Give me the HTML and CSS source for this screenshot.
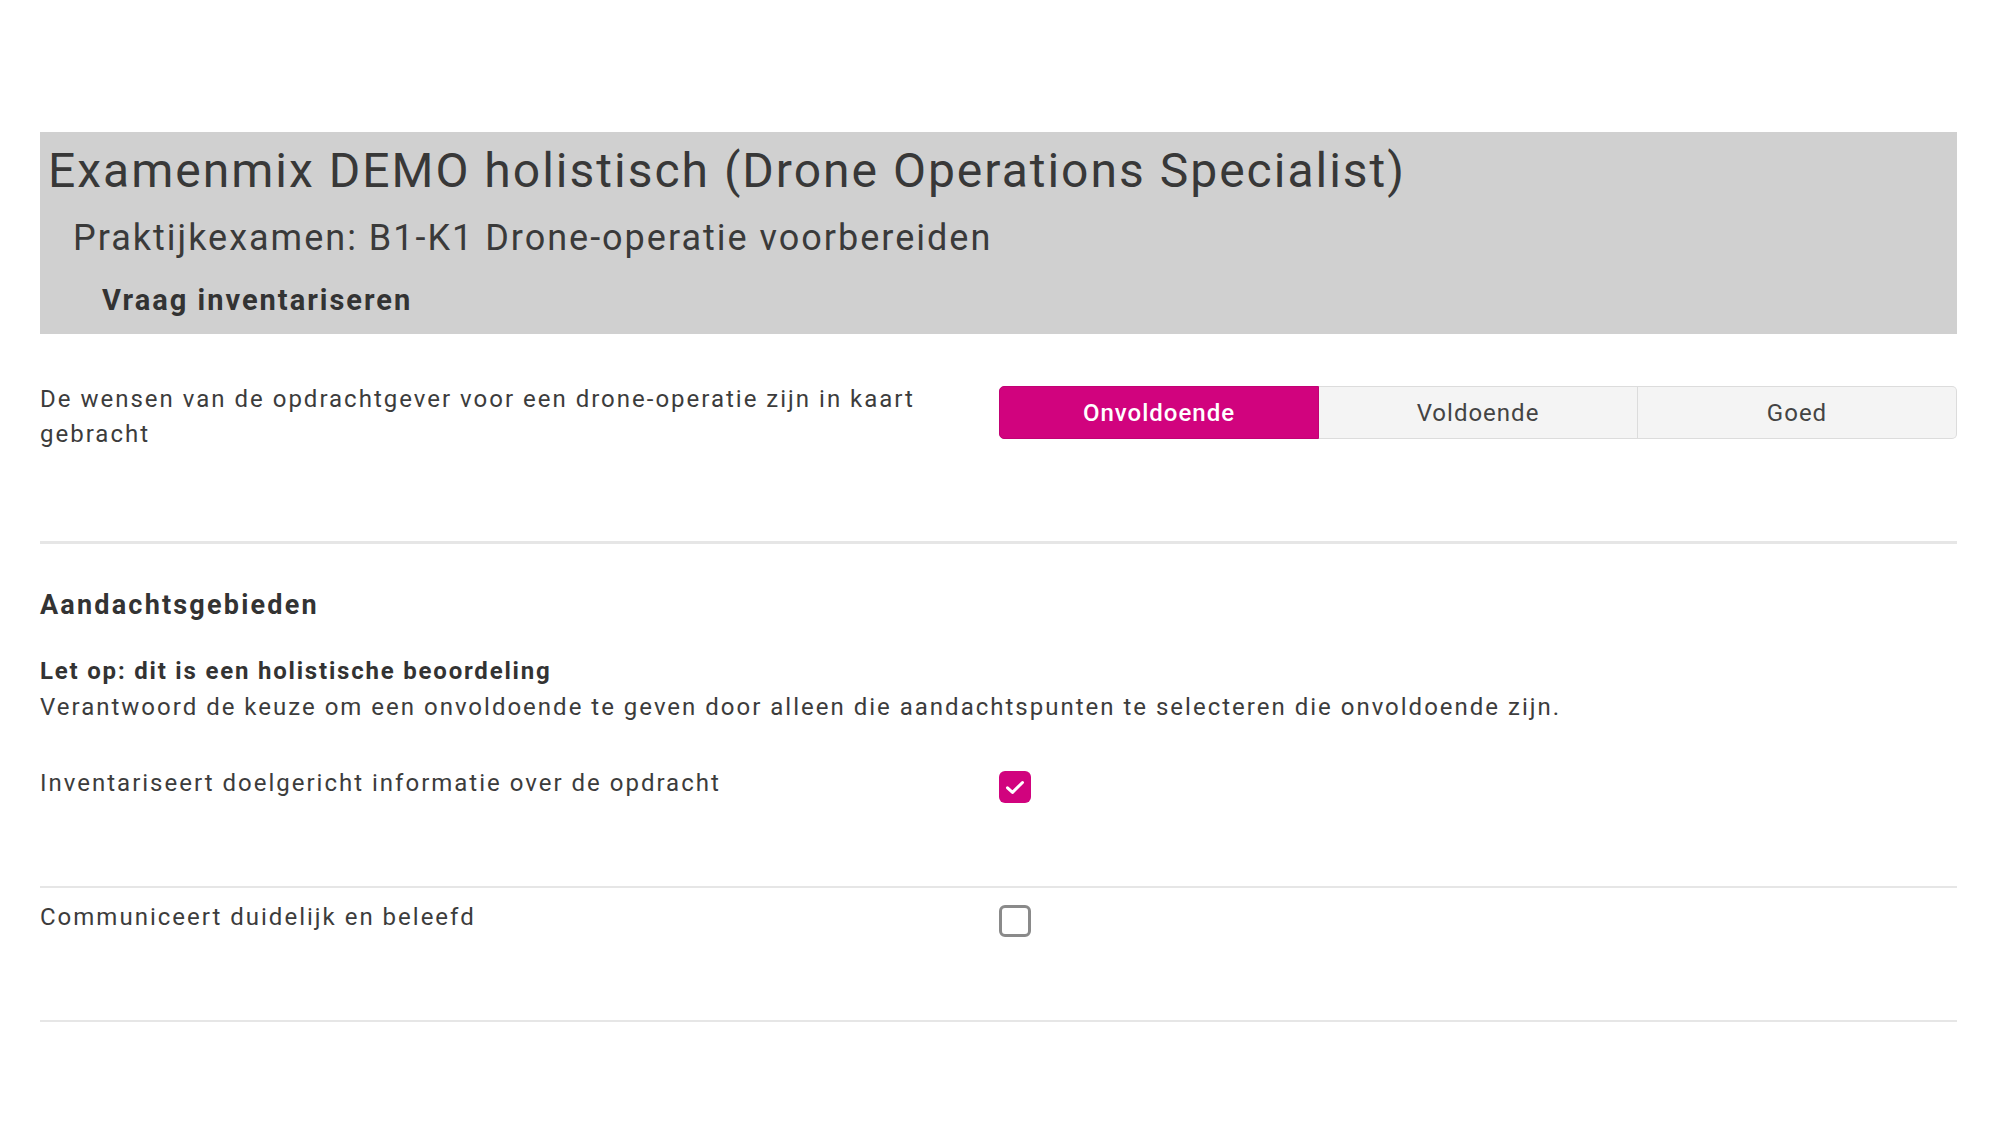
FILE: index.html
```html
<!DOCTYPE html>
<html lang="nl">
<head>
<meta charset="utf-8">
<title>Examenmix DEMO holistisch</title>
<link rel="stylesheet" href="styles.css">
</head>
<body>
<main class="page">
  <header class="exam-header">
    <h1 class="exam-title">Examenmix DEMO holistisch (Drone Operations Specialist)</h1>
    <h2 class="exam-subtitle">Praktijkexamen: B1-K1 Drone-operatie voorbereiden</h2>
    <h3 class="exam-question">Vraag inventariseren</h3>
  </header>

  <section class="criterion">
    <div class="criterion-label">De wensen van de opdrachtgever voor een drone-operatie zijn in kaart gebracht</div>
    <div class="choice-group">
      <button class="choice choice-selected">Onvoldoende</button>
      <button class="choice">Voldoende</button>
      <button class="choice">Goed</button>
    </div>
  </section>

  <section class="focus">
    <h4 class="focus-title">Aandachtsgebieden</h4>
    <p class="focus-note"><strong>Let op: dit is een holistische beoordeling</strong><br>Verantwoord de keuze om een onvoldoende te geven door alleen die aandachtspunten te selecteren die onvoldoende zijn.</p>

    <div class="focus-list">
      <div class="focus-item">
        <div class="focus-text">Inventariseert doelgericht informatie over de opdracht</div>
        <span class="checkbox checkbox-checked">
          <svg viewBox="0 0 32 32" width="32" height="32"><path d="M8.5 16.8l5 4.6L23.5 11.5" fill="none" stroke="#fff" stroke-width="3" stroke-linecap="round" stroke-linejoin="round"/></svg>
        </span>
      </div>
      <div class="focus-item">
        <div class="focus-text">Communiceert duidelijk en beleefd</div>
        <span class="checkbox"></span>
      </div>
    </div>
  </section>
</main>
</body>
</html>
```

FILE: styles.css
```css
* { box-sizing: border-box; }

html, body {
  margin: 0;
  padding: 0;
  background: #ffffff;
}

body {
  font-family: Roboto, "Liberation Sans", Arial, sans-serif;
  color: #3c3c3c;
}

.page {
  padding: 132px 43px 0 40px;
}

/* Header */
.exam-header {
  background: #d0d0d0;
  padding: 7px 0 7px 0;
  height: 202px;
}

.exam-title {
  margin: 0;
  padding-left: 8px;
  font-size: 48px;
  line-height: 64px;
  font-weight: 400;
  letter-spacing: 2px;
  color: #383838;
}

.exam-subtitle {
  margin: 0;
  padding-left: 33px;
  font-size: 36px;
  line-height: 70px;
  font-weight: 400;
  letter-spacing: 2px;
  color: #3a3a3a;
}

.exam-question {
  margin: 0;
  padding-left: 62px;
  font-size: 29px;
  line-height: 54px;
  font-weight: 700;
  letter-spacing: 2px;
  color: #333;
}

/* Criterion row */
.criterion {
  display: flex;
  align-items: flex-start;
  padding: 48px 0 89px 0;
  border-bottom: 3px solid #e6e6e6;
}

.criterion-label {
  flex: 0 0 959px;
  width: 959px;
  padding-right: 60px;
  font-size: 24px;
  line-height: 35px;
  letter-spacing: 2px;
}

.choice-group {
  flex: 1;
  display: flex;
  margin-top: 4px;
  height: 53px;
}

.choice {
  flex: 1;
  font-family: inherit;
  font-size: 24px;
  letter-spacing: 1px;
  color: #444;
  background: #f4f4f4;
  border: 1px solid #dcdcdc;
  border-left: none;
  margin: 0;
  padding: 0;
}

.choice:first-child {
  border-left: 1px solid #dcdcdc;
  border-radius: 5px 0 0 5px;
}

.choice:last-child {
  border-radius: 0 5px 5px 0;
}

.choice-selected {
  background: #d1037e;
  border-color: #c10274;
  color: #ffffff;
  font-weight: 500;
}

.choice-selected:first-child {
  border-left-color: #c10274;
}

/* Focus areas */
.focus {
  padding-top: 41px;
}

.focus-title {
  margin: 0;
  font-size: 27px;
  line-height: 40px;
  font-weight: 700;
  letter-spacing: 2.2px;
  color: #333;
}

.focus-note {
  margin: 28px 0 0 0;
  font-size: 24px;
  line-height: 36px;
  letter-spacing: 2px;
}

.focus-note strong {
  font-weight: 700;
  letter-spacing: 1.8px;
  color: #333;
}

.focus-list {
  margin-top: 29px;
}

.focus-item {
  display: flex;
  align-items: flex-start;
  height: 134px;
  padding-top: 11px;
  border-bottom: 2px solid #e6e6e6;
}

.focus-text {
  flex: 0 0 959px;
  width: 959px;
  font-size: 24px;
  line-height: 36px;
  letter-spacing: 2px;
}

.checkbox {
  display: block;
  width: 32px;
  height: 32px;
  margin-top: 6px;
  border: 3px solid #8a8a8a;
  border-radius: 6px;
  background: #fff;
}

.checkbox-checked {
  border: none;
  background: #d1037e;
}

.checkbox svg {
  display: block;
}
```
